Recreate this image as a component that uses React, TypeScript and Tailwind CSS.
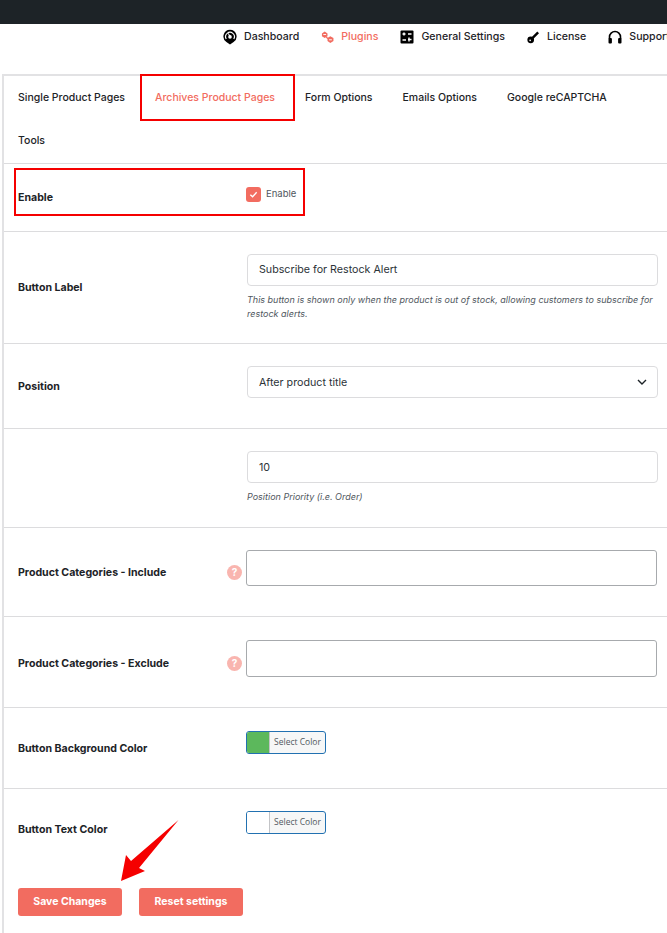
export default function App() {
  const nav = [
    { label: "Dashboard", active: false, icon: <svg viewBox="0 0 14 16" className="w-[14px] h-[16px]"><path fill="#000" d="M7 .8a6.6 6.6 0 0 0-3.6 12.1L7 15.4l3.6-2.5A6.6 6.6 0 0 0 7 .8z"/><path d="M3.2 10a4.4 4.4 0 1 1 7.6 0" fill="none" stroke="#fff" strokeWidth="1.2"/><circle cx="7" cy="7.9" r="1.8" fill="#fff"/><path d="M6.4 7.4 4.8 4.6l.8-.4 2 3z" fill="#fff"/></svg> },
    { label: "Plugins", active: true, icon: <svg viewBox="0 0 14 14" className="w-[13px] h-[14px]"><path d="M1 3.2 4 1.2l3 2v3l-3 2-3-2z" fill="#f26c60"/><path d="M7 8.2l3-2 3.4 2v3.2l-3.4 2-3-2z" fill="#f26c60"/><path d="M5.6 7.2 8 8.8" stroke="#f26c60" strokeWidth="1.4"/><path d="M8.7 10h3" stroke="#fff" strokeWidth="1"/><path d="M2.500 4.300h3" stroke="#fff" strokeWidth="1"/></svg> },
    { label: "General Settings", active: false, icon: <svg viewBox="0 0 14 14" className="w-[14px] h-[14px]"><rect x="0.5" y="0.5" width="13" height="13" rx="1" fill="#000"/><path d="M2.500 4h3M4 2.500v3M8 4h3.500M2.500 10H6M9 7.500v4M8 9.500h3.500" stroke="#fff" strokeWidth="1.4"/></svg> },
    { label: "License", active: false, icon: <svg viewBox="0 0 14 14" className="w-[13px] h-[14px]"><circle cx="4" cy="10" r="3.6" fill="#000"/><path d="M5 9 12 2" stroke="#000" strokeWidth="2.6"/><circle cx="3.4" cy="10.6" r="0.9" fill="#fff"/></svg> },
    { label: "Support", active: false, icon: <svg viewBox="0 0 14 14" className="w-[14px] h-[14px]"><path d="M1.500 9V7a5.500 5.500 0 0 1 11 0v2" fill="none" stroke="#000" strokeWidth="1.6"/><rect x="0.5" y="8" width="3.4" height="5.5" rx="1" fill="#000"/><rect x="10.1" y="8" width="3.4" height="5.5" rx="1" fill="#000"/></svg> },
  ];
  const tabs1 = ["Single Product Pages", "Archives Product Pages", "Form Options", "Emails Options", "Google reCAPTCHA"];
  const labelCls = "text-[10.6px] font-bold text-[#1d2327] leading-[14px]";
  const inputCls = "w-[411px] border border-[#dcdcde] rounded-[4px] bg-white px-[11px] text-[10.7px] text-[#2c3338] flex items-center";
  const help = (
    <span className="w-[15px] h-[15px] rounded-full bg-[#f9b5af] text-white text-[10px] font-bold flex items-center justify-center shrink-0">?</span>
  );
  const colorBtn = (bg: string) => (
    <div className="w-[80px] h-[23px] flex border border-[#2271b1] rounded-[3px] bg-[#f6f7f7] overflow-hidden">
      <span className={`w-[23px] h-full border-r border-[#c3c4c7] ${bg}`}></span>
      <span className="flex-1 text-center text-[8.5px] leading-[20px] text-[#50575e] font-['Open_Sans',sans-serif]">Select Color</span>
    </div>
  );
  return (
    <div className="relative w-[667px] h-[933px] bg-white overflow-hidden font-['Inter',sans-serif]">
      <div className="h-[24px] bg-[#1d2327]"></div>

      <nav className="h-[25px] w-[667px] overflow-hidden pl-[223px] pt-[1px] flex items-center whitespace-nowrap text-[10.6px] font-medium gap-[22px]">
        {nav.map((n) => (
          <div key={n.label} className="flex items-center gap-[7px] shrink-0">
            {n.icon}
            <span className={n.active ? "text-[#f26c60]" : "text-[#1d2327]"}>{n.label}</span>
          </div>
        ))}
      </nav>

      <main className="mt-[25px] ml-[2px] border-l-2 border-t-2 border-[#e2e2e4]">
        <div className="h-[88px] border-b border-[#dcdcde]">
          <div className="flex h-[44px] items-center pl-[14px] text-[10.5px] text-[#1d2327] font-medium gap-[30px]">
            {tabs1.map((t, i) => (
              <span key={t} className={i === 1 ? "text-[#f26c60]" : ""}>{t}</span>
            ))}
          </div>
          <div className="h-[41px] flex items-center pl-[14px] text-[10.5px] text-[#1d2327] font-medium">Tools</div>
        </div>

        <div className="h-[68px] border-b border-[#dcdcde] flex pl-[14px]">
          <div className={`${labelCls} w-[228px] pt-[27px]`}>Enable</div>
          <div className="flex items-center gap-[5px] pb-[6px]">
            <span className="w-[15px] h-[15px] rounded-[3px] bg-[#f26c60] flex items-center justify-center">
              <svg viewBox="0 0 10 10" className="w-[9px] h-[9px]"><path d="M1.500 5.200 4 7.500l4.500-5" fill="none" stroke="#fff" strokeWidth="1.5" /></svg>
            </span>
            <span className="text-[9.5px] text-[#50575e]">Enable</span>
          </div>
        </div>

        <div className="h-[112px] border-b border-[#dcdcde] flex pl-[14px]">
          <div className={`${labelCls} w-[229px] pt-[49px]`}>Button Label</div>
          <div className="pt-[22px]">
            <div className={`${inputCls} h-[32px]`}>Subscribe for Restock Alert</div>
            <p className="mt-[7px] w-[411px] text-[9px] leading-[14px] italic text-[#50575e]">This button is shown only when the product is out of stock, allowing customers to subscribe for restock alerts.</p>
          </div>
        </div>

        <div className="h-[85px] border-b border-[#dcdcde] flex pl-[14px]">
          <div className={`${labelCls} w-[229px] pt-[36px]`}>Position</div>
          <div className="pt-[22px]">
            <div className={`${inputCls} h-[32px] justify-between pt-[2px]`}>
              After product title
              <svg viewBox="0 0 10 6" className="w-[10px] h-[6px] mr-[-1px] mt-[-2px]"><path d="M1 1l4 4 4-4" fill="none" stroke="#1d2327" strokeWidth="1.4" /></svg>
            </div>
          </div>
        </div>

        <div className="h-[99px] border-b border-[#dcdcde] flex pl-[243px]">
          <div className="pt-[22px]">
            <div className={`${inputCls} h-[32px] pt-[2px]`}>10</div>
            <p className="mt-[7px] text-[9px] leading-[14px] italic text-[#50575e]">Position Priority (i.e. Order)</p>
          </div>
        </div>

        <div className="h-[89px] border-b border-[#dcdcde] flex items-start pl-[14px]">
          <div className={`${labelCls} w-[209px] pt-[38px]`}>Product Categories - Include</div>
          <div className="pt-[37px]">{help}</div>
          <div className="ml-[4px] mt-[22px] w-[411px] h-[36px] border border-[#a7aaad] rounded-[3px]"></div>
        </div>

        <div className="h-[91px] border-b border-[#dcdcde] flex items-start pl-[14px]">
          <div className={`${labelCls} w-[209px] pt-[40px]`}>Product Categories - Exclude</div>
          <div className="pt-[39px]">{help}</div>
          <div className="ml-[4px] mt-[23px] w-[411px] h-[37px] border border-[#a7aaad] rounded-[3px]"></div>
        </div>

        <div className="h-[81px] border-b border-[#dcdcde] flex pl-[14px]">
          <div className={`${labelCls} w-[228px] pt-[34px]`}>Button Background Color</div>
          <div className="pt-[23px]">{colorBtn("bg-[#5cb85c]")}</div>
        </div>

        <div className="h-[145px] pl-[14px]">
          <div className="flex">
            <div className={`${labelCls} w-[228px] pt-[34px]`}>Button Text Color</div>
            <div className="pt-[22px]">{colorBtn("bg-white")}</div>
          </div>
          <div className="flex gap-[17px] mt-[51px]">
            <button className="w-[104px] h-[28px] rounded-[3px] bg-[#f26c60] text-white text-[10.5px] font-bold">Save Changes</button>
            <button className="w-[104px] h-[28px] rounded-[3px] bg-[#f26c60] text-white text-[10.5px] font-bold">Reset settings</button>
          </div>
        </div>
      </main>

      <div className="absolute left-[140px] top-[74px] w-[155px] h-[47px] border-2 border-[#f50000]"></div>
      <div className="absolute left-[14px] top-[168px] w-[291px] h-[48px] border-2 border-[#f50000]"></div>
      <svg viewBox="0 0 667 933" className="absolute inset-0 w-[667px] h-[933px] pointer-events-none">
        <path d="M178.500 820 139 868 145 871 121 881 126 855 131 861z" fill="#f50000" />
      </svg>
    </div>
  );
}
